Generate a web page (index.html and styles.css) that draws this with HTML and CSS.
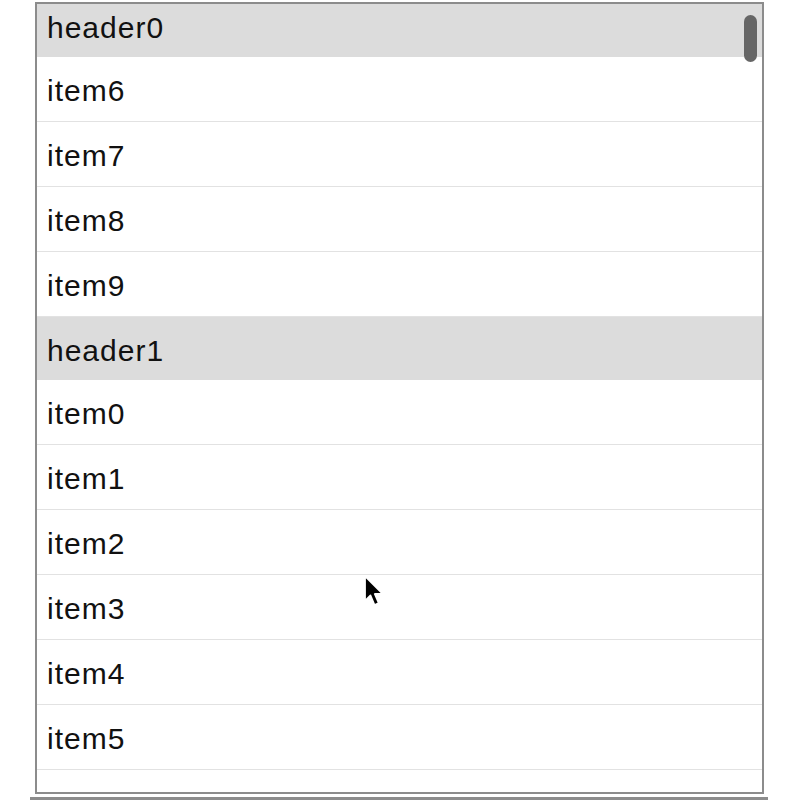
FILE: index.html
```html
<!DOCTYPE html>
<html>
<head>
<meta charset="utf-8">
<link rel="stylesheet" href="styles.css">
</head>
<body>
<div class="frame">
  <div class="list">
    <div class="header first">header0</div>
    <div class="item">item6</div>
    <div class="item">item7</div>
    <div class="item">item8</div>
    <div class="item">item9</div>
    <div class="header">header1</div>
    <div class="item">item0</div>
    <div class="item">item1</div>
    <div class="item">item2</div>
    <div class="item">item3</div>
    <div class="item">item4</div>
    <div class="item">item5</div>
    <div class="item">item6</div>
  </div>
  <div class="scrollbar"></div>
</div>
<div class="under"></div>
<svg class="cursor" width="24" height="36" viewBox="0 0 24 36">
  <path d="M2 2 L2 27 L7.5 21.5 L11.5 31 L15.8 29.2 L11.8 20 L20 20 Z" fill="#000" stroke="#fff" stroke-width="1.8" stroke-linejoin="round"/>
</svg>
</body>
</html>
```

FILE: styles.css
```css
html, body {
  margin: 0;
  padding: 0;
  background: #fff;
}
body {
  position: relative;
  width: 800px;
  height: 800px;
  overflow: hidden;
  font-family: "Liberation Sans", Arial, sans-serif;
}
.frame {
  position: relative;
  margin: 2px 0 0 35px;
  width: 725px;
  height: 788px;
  border: 2px solid #8c8c8c;
  overflow: hidden;
}
.list {
  display: flex;
  flex-direction: column;
}
.header, .item {
  box-sizing: border-box;
  flex: none;
  display: flex;
  align-items: center;
  padding: 4px 0 0 10px;
  font-size: 30px;
  letter-spacing: 1px;
  color: #111;
}
.header {
  height: 63px;
  background: #dcdcdc;
}
.header.first {
  margin-top: -10px;
}
.item {
  height: 65px;
  border-bottom: 1px solid #e2e2e2;
}
.scrollbar {
  position: absolute;
  top: 11px;
  right: 5px;
  width: 13px;
  height: 47px;
  border-radius: 7px;
  background: #666;
}
.under {
  margin: 3px 0 0 30px;
  width: 738px;
  height: 3px;
  background: #8c8c8c;
}
.cursor {
  position: absolute;
  left: 363px;
  top: 574px;
}
```
